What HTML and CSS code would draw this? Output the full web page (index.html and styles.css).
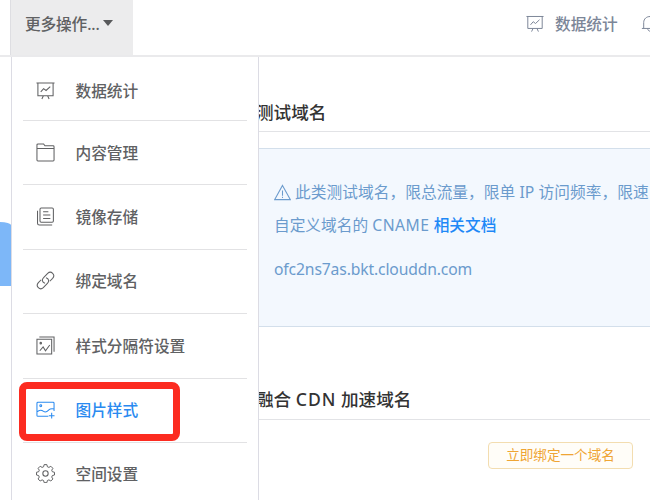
FILE: index.html
```
<!DOCTYPE html>
<html lang="zh-CN">
<head>
    <meta charset="UTF-8">
    <meta name="viewport" content="width=device-width, initial-scale=1.0">
    <title>空间概览</title>
    <link rel="stylesheet" href="styles.css">
</head>
<body>
    <!-- Shared icons -->
    <svg class="symbols" width="0" height="0">
        <symbol id="icon-board" viewBox="0 0 20 20">
            <path d="M.5 2.200h19M2 2.200v13.300h16V2.200M5 11.500l3-3.500 2.600 2 4.400-4.200M7.800 15.500l-1.600 3.500M12.200 15.500l1.600 3.500"/>
        </symbol>
    </svg>

    <header class="header">
        <div class="more">
            <button class="more-toggle">更多操作...<span class="caret"></span></button>
            <ul class="menu">
                <li><a href="#"><svg class="icon"><use href="#icon-board"/></svg>数据统计</a></li>
                <li><a href="#"><svg class="icon" viewBox="0 0 20 20"><path d="M1 18V2.200Q1 1 2.200 1H8l1.400 2H18q1 0 1 1v14q0 1-1 1H2q-1 0-1-1zM1 5.800h18"/></svg>内容管理</a></li>
                <li><a href="#"><svg class="icon" viewBox="0 0 20 20"><path d="M5.500 1H17q1.300 0 1.300 1.300v12.400Q18.300 16 17 16H5.500q-1.300 0-1.300-1.300V2.300Q4.200 1 5.500 1zM1.600 4v13q0 2 2 2H17M7.500 5H13M7.500 8.500h7.600M7.500 12h7.600"/></svg>镜像存储</a></li>
                <li><a href="#"><svg class="icon" viewBox="0 0 20 20"><path d="M9.500 13C6.300 12 6 9 8 7l4.300-4.500c3.600-3.400 8.600 1.500 5.200 5.200L14.500 10.800M10.500 7c3.200 1 3.500 4 1.500 6l-4.300 4.500c-3.600 3.400-8.600-1.500-5.200-5.200L5.500 9.200"/></svg>绑定域名</a></li>
                <li><a href="#"><svg class="icon" viewBox="0 0 20 20"><path d="M1 3.500h15.500V19H1zM3.500 1H19v15.500M4 15.500l3.500-4 2.500 4 4.500-6"/><circle cx="5" cy="7.500" r=".8"/></svg>样式分隔符设置</a></li>
                <li class="active"><a href="#"><svg class="icon" viewBox="0 0 20 20"><path d="M13 17.200H2q-1 0-1-1V3.300q0-1 1-1h16q1 0 1 1v8.400M1 12.500c3-2.500 4.500-2.200 7-.5s4 0 5.500-1.500 3-1.500 5.500-1M16.500 13.500v6M13.500 16.500h6"/><circle cx="5" cy="6" r="1"/></svg>图片样式</a></li>
                <li><a href="#"><svg class="icon" viewBox="0 0 20 20"><path stroke-linejoin="round" d="M8.500 1h3l.6 2.400 1.700.7 2.100-1.300 2.300 2.300-1.300 2.100.7 1.700 2.400.6v3l-2.400.6-.7 1.700 1.300 2.100-2.300 2.300-2.100-1.300-1.700.7-.6 2.400h-3l-.6-2.400-1.700-.7-2.100 1.300-2.300-2.300 1.300-2.100-.7-1.700L0 12.500v-3l2.400-.6.7-1.700-1.300-2.100 2.300-2.300 2.100 1.300 1.700-.7z" transform="translate(.5 -.3) scale(.95)"/><circle cx="10" cy="10" r="2.800"/></svg>空间设置</a></li>
            </ul>
            <div class="highlight"></div>
        </div>
        <nav class="nav">
            <a href="#"><svg class="icon"><use href="#icon-board"/></svg>数据统计</a>
            <a href="#" class="bell"><svg class="icon" viewBox="0 0 20 20"><path d="M1 15.500h18M3 15.500V9c0-9 14-9 14 0v6.500M7.500 15.500c0 4 5 4 5 0"/></svg></a>
        </nav>
    </header>

    <main class="content">
        <div class="chart"></div>
        <section class="domains">
            <h2>测试域名</h2>
            <div class="notice">
                <p class="limits"><svg class="warn" viewBox="0 0 16 16"><path d="M8 1.300L15.300 14.700H.7zM8 6v5M8 12v1.200"/></svg>此类测试域名，限总流量，限单 IP 访问频率，限速</p>
                <p>自定义域名的 <span class="latin">CNAME</span> <a href="#">相关文档</a></p>
                <p class="host">ofc2ns7as.bkt.clouddn.com</p>
            </div>
            <h2 class="cdn">融合 <span class="latin">CDN</span> 加速域名</h2>
            <button class="bind">立即绑定一个域名</button>
        </section>
    </main>
</body>
</html>
```
FILE: styles.css
```
/* Global Styles */
* {
    box-sizing: border-box;
}

body {
    margin: 0;
    height: 500px;
    overflow: hidden;
    background: #fff;
    color: #606163;
    font-family: 'Noto Sans', 'Noto Sans CJK SC', sans-serif;
    font-size: 15.7px;
}

a {
    color: inherit;
    text-decoration: none;
}

button {
    font-family: inherit;
}

.symbols {
    position: absolute;
}

.icon {
    width: 19px;
    height: 19px;
    flex-shrink: 0;
    fill: none;
    stroke: currentColor;
    stroke-width: 1.1;
}

.latin {
    letter-spacing: 0.5px;
}

/* Header */
.header {
    display: flex;
    justify-content: space-between;
    height: 57px;
    padding-left: 10px;
    border-bottom: 2px solid #eaeaec;
}

.more {
    position: relative;
}

.more-toggle {
    display: flex;
    align-items: center;
    width: 123px;
    height: 55px;
    padding: 0 0 8px 14px;
    border: 0;
    border-left: 1px solid #dedee2;
    background: #ececed;
    color: #606163;
    font-size: 15.7px;
    font-weight: 500;
    letter-spacing: -0.15px;
}

.caret {
    margin: -2px 0 0 3px;
    border: 5px solid transparent;
    border-top: 6px solid #58595b;
    border-bottom: 0;
}

.nav {
    display: flex;
    width: 124px;
    height: 46px;
    overflow: hidden;
    color: #7c8698;
    font-weight: 500;
}

.nav a {
    display: flex;
    flex-shrink: 0;
    align-items: center;
    gap: 11px;
}

.nav .icon {
    width: 18px;
}

.nav .bell {
    margin-left: 23px;
}

/* Dropdown Menu */
.menu {
    position: absolute;
    z-index: 1;
    top: 57px;
    left: 1px;
    width: 248px;
    height: 443px;
    margin: 0;
    padding: 0 11px;
    border: 1px solid #dcdce4;
    border-width: 0 1px;
    background: #fff;
    list-style: none;
    font-weight: 500;
}

.menu li {
    height: 64.4px;
    border-bottom: 1px solid #e2e2e4;
}

.menu li:first-child {
    height: 64px;
}

.menu li:last-child {
    height: 57px;
    border: 0;
}

.menu a {
    display: flex;
    align-items: center;
    gap: 20.5px;
    height: 64px;
    padding: 0 0 2px 13px;
}

.menu li:first-child a {
    padding-top: 5px;
}

.menu .active {
    color: #2a8af0;
}

.highlight {
    position: absolute;
    z-index: 2;
    top: 382px;
    left: 9px;
    width: 161px;
    height: 59px;
    border: 7px solid #fc2b20;
    border-radius: 8px;
}

/* Content */
.content {
    display: flex;
    overflow: hidden;
}

.chart {
    width: 11px;
    height: 64px;
    margin-top: 165px;
    border-top-right-radius: 11px 3px;
    background: #7db7f8;
}

.domains {
    flex: 1;
    min-width: 0;
    margin-left: 245px;
}

h2 {
    height: 75px;
    margin: 0;
    padding-top: 42px;
    border-bottom: 1px solid #e2e3e6;
    color: #333;
    font-size: 17.6px;
    font-weight: 500;
    line-height: 26px;
    white-space: nowrap;
}

.notice {
    height: 179px;
    margin-top: 16px;
    padding: 27px 0 0 18px;
    border: 1px solid #d3dfeb;
    border-width: 1px 0;
    background: #f3f8fe;
    color: #6b9bcd;
    white-space: nowrap;
}

.notice p {
    margin: 0;
    line-height: 33px;
}

.notice .limits {
    letter-spacing: 0.05px;
}

.notice .host {
    margin-top: 11px;
    letter-spacing: -0.14px;
}

.notice a {
    color: #1e88f7;
    font-weight: 500;
}

.warn {
    width: 17px;
    height: 17px;
    margin-right: 4px;
    fill: none;
    stroke: currentColor;
    vertical-align: -3px;
}

.cdn {
    height: 93px;
    padding-top: 59px;
}

.cdn .latin {
    letter-spacing: 1px;
}

.bind {
    display: block;
    width: 145px;
    height: 27px;
    margin: 22px 0 0 232px;
    padding: 0 0 3px;
    border: 1px solid #f3ddb0;
    border-radius: 4px;
    background: #fffdf8;
    color: #efa534;
    font-size: 13.6px;
}
```
